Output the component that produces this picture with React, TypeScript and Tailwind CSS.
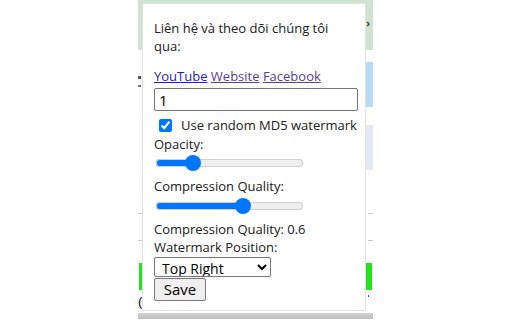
import React, { useState } from "react";

const sliderClass =
  "appearance-none block w-[147px] h-[16px] bg-transparent cursor-pointer " +
  "[&::-webkit-slider-runnable-track]:h-[8px] [&::-webkit-slider-runnable-track]:rounded-full " +
  "[&::-webkit-slider-runnable-track]:bg-[linear-gradient(to_right,#0075ff_var(--fill),#efefef_var(--fill))] " +
  "[&::-webkit-slider-runnable-track]:shadow-[inset_0_0_0_1px_#d0d0d0] " +
  "[&::-webkit-slider-thumb]:appearance-none [&::-webkit-slider-thumb]:w-[16px] [&::-webkit-slider-thumb]:h-[16px] " +
  "[&::-webkit-slider-thumb]:rounded-full [&::-webkit-slider-thumb]:bg-[#0075ff] [&::-webkit-slider-thumb]:mt-[-4px]";

function Slider({
  value,
  onChange,
  className,
}: {
  value: number;
  onChange: (v: number) => void;
  className?: string;
}) {
  return (
    <input
      type="range"
      min={0}
      max={1}
      step={0.01}
      value={value}
      onChange={(e) => onChange(Number(e.target.value))}
      className={`${sliderClass} ${className ?? ""}`}
      style={{ ["--fill" as any]: `calc(8px + ${value} * (100% - 16px))` }}
    />
  );
}

export default function App() {
  const [opacity, setOpacity] = useState(0.22);
  const [quality, setQuality] = useState(0.6);
  const [useRandom, setUseRandom] = useState(true);
  const [text, setText] = useState("1");
  const [position, setPosition] = useState("top-right");

  return (
    <div className="w-[512px] h-[320px] bg-white overflow-hidden relative font-['Open_Sans',sans-serif]">
      {/* page behind the popup */}
      <div className="ml-[138px] w-[235px] h-full flex flex-col">
        <div className="h-[50px] bg-[#cfe3ce] flex justify-end items-start pt-[18px] pr-[3px] text-[10px] leading-none font-bold text-[#333]">
          ›
        </div>
        <div className="h-[12px]" />
        <div className="h-[45px] flex justify-between">
          <div className="w-[3px] flex flex-col gap-[6px] pt-[14px]">
            <div className="h-[3px] bg-[#555]" />
            <div className="h-[2px] bg-[#777]" />
          </div>
          <div className="w-[7px] bg-[#b6dbf4]" />
        </div>
        <div className="h-[18px]" />
        <div className="h-[45px] flex justify-end">
          <div className="w-[7px] bg-[#e4e9f1]" />
        </div>
        <div className="h-[43px]" />
        <div className="h-px flex justify-between">
          <div className="w-[4px] bg-[#c8c8c8]" />
          <div className="w-[5px] bg-[#c8c8c8]" />
        </div>
        <div className="h-[26px]" />
        <div className="h-px flex justify-between">
          <div className="w-[4px] bg-[#c8c8c8]" />
          <div className="w-[5px] bg-[#c8c8c8]" />
        </div>
        <div className="h-[22px]" />
        <div className="h-[27px] flex justify-between px-px">
          <div className="w-[3px] bg-[#22e31c]" />
          <div className="w-[6px] bg-[#22e31c]" />
        </div>
        <div className="h-[5px]" />
        <div className="h-[14px] flex justify-between items-start">
          <span className="text-[13px] leading-[14px] font-['Liberation_Sans',sans-serif] text-black">(</span>
          <div className="flex gap-[2px] pr-[4px]">
            <div className="w-[2px] h-[13px] bg-[#1b1f6b]" />
            <div className="w-[1px] h-[2px] bg-[#555]" />
          </div>
        </div>
        <div className="h-[4px]" />
        <div className="h-[6px] bg-gradient-to-b from-[#d2d2d2] to-[#bdbdbd]" />
      </div>

      {/* extension popup */}
      <div className="absolute left-[142px] top-[3px] w-[224px] h-[308px] bg-white border border-[#e2e2e2] pl-[11px] pt-[15px] text-[13px] text-[#202020]">
        <p className="leading-[18px] w-[200px]">Liên hệ và theo dõi chúng tôi qua:</p>
        <div className="mt-[12px] leading-[18px]">
          <a href="#" className="text-[#1a1ad6] underline">YouTube</a>{" "}
          <a href="#" className="text-[#5a3d99] underline">Website</a>{" "}
          <a href="#" className="text-[#5a3d99] underline">Facebook</a>
        </div>
        <input
          type="text"
          value={text}
          onChange={(e) => setText(e.target.value)}
          className="block mt-[3px] w-[204px] h-[23px] border border-[#767676] rounded-[2px] px-[4px] text-[15px] text-black bg-white"
        />
        <label className="flex items-center h-[19px] mt-[5px] leading-[19px]">
          <input
            type="checkbox"
            checked={useRandom}
            onChange={(e) => setUseRandom(e.target.checked)}
            className="w-[13px] h-[13px] ml-[5px] mr-[9px] mb-[1px] accent-[#0075ff]"
          />
          <span>Use random MD5 watermark</span>
        </label>
        <div className="leading-[18px]">Opacity:</div>
        <Slider value={opacity} onChange={setOpacity} className="ml-[2px] mt-[2px]" />
        <div className="leading-[18px] mt-[6px]">Compression Quality:</div>
        <Slider value={quality} onChange={setQuality} className="ml-[2px] mt-[3px]" />
        <div className="leading-[18px] mt-[6px]">Compression Quality: {quality}</div>
        <div className="leading-[18px]">Watermark Position:</div>
        <select
          value={position}
          onChange={(e) => setPosition(e.target.value)}
          className="block w-[117px] h-[20px] border border-[#767676] rounded-[2px] bg-white text-[14px] leading-[18px] py-0 text-black pl-[3px] mt-[1px]"
        >
          <option value="top-left">Top Left</option>
          <option value="top-right">Top Right</option>
          <option value="bottom-left">Bottom Left</option>
          <option value="bottom-right">Bottom Right</option>
          <option value="center">Center</option>
        </select>
        <button className="block mt-[1px] w-[52px] h-[23px] border border-[#767676] rounded-[2px] bg-[#efefef] text-[15px] text-black leading-none">
          Save
        </button>
      </div>
    </div>
  );
}
